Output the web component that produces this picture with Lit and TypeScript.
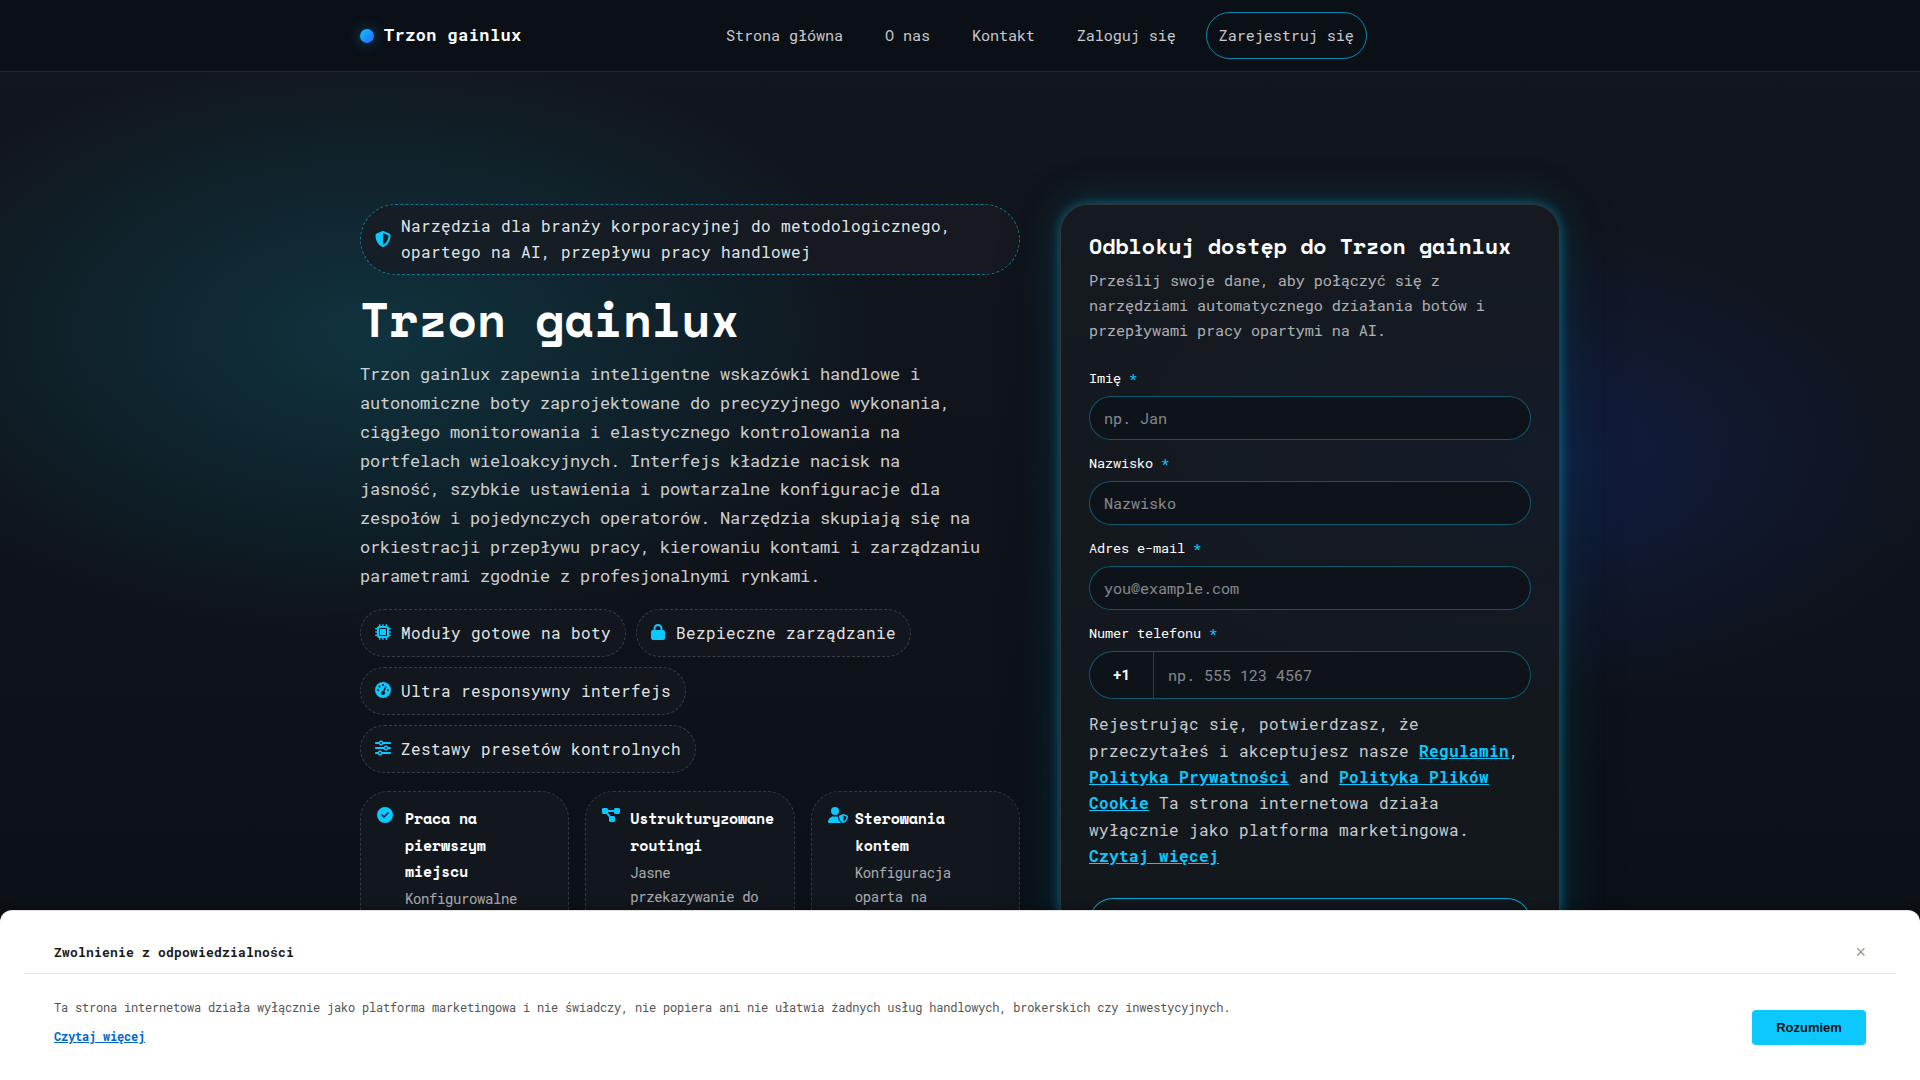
import { LitElement, html, css, svg } from "lit";
import { customElement } from "lit/decorators.js";

const ICONS: Record<string, { w: number; d: string }> = {
  shield: { w: 512, d: "M256 0c4.6 0 9.2 1 13.4 2.9L457.7 82.8c22 9.3 38.4 31 38.3 57.2c-.5 99.2-41.3 280.7-213.6 363.2c-16.7 8-36.1 8-52.8 0C57.3 420.7 16.5 239.2 16 140c-.1-26.2 16.3-47.9 38.3-57.2L242.7 2.9C246.8 1 251.4 0 256 0zm0 66.8V444.8C394 378 431.1 230.1 432 141.4L256 66.8l0 0z" },
  chip: { w: 512, d: "M176 24c0-13.3-10.7-24-24-24s-24 10.7-24 24V64c-35.3 0-64 28.7-64 64H24c-13.3 0-24 10.7-24 24s10.7 24 24 24H64v56H24c-13.3 0-24 10.7-24 24s10.7 24 24 24H64v56H24c-13.3 0-24 10.7-24 24s10.7 24 24 24H64c0 35.3 28.7 64 64 64v40c0 13.3 10.7 24 24 24s24-10.7 24-24V448h56v40c0 13.3 10.7 24 24 24s24-10.7 24-24V448h56v40c0 13.3 10.7 24 24 24s24-10.7 24-24V448c35.3 0 64-28.7 64-64h40c13.3 0 24-10.7 24-24s-10.7-24-24-24H448V280h40c13.3 0 24-10.7 24-24s-10.7-24-24-24H448V176h40c13.3 0 24-10.7 24-24s-10.7-24-24-24H448c0-35.3-28.7-64-64-64V24c0-13.3-10.7-24-24-24s-24 10.7-24 24V64H280V24c0-13.3-10.7-24-24-24s-24 10.7-24 24V64H176V24zM160 128H352c17.7 0 32 14.3 32 32V352c0 17.7-14.3 32-32 32H160c-17.7 0-32-14.3-32-32V160c0-17.7 14.3-32 32-32zm192 32H160V352H352V160z" },
  lock: { w: 448, d: "M144 144v48H304V144c0-44.2-35.8-80-80-80s-80 35.8-80 80zM80 192V144C80 64.5 144.5 0 224 0s144 64.5 144 144v48h16c35.3 0 64 28.7 64 64V448c0 35.3-28.7 64-64 64H64c-35.3 0-64-28.7-64-64V256c0-35.3 28.7-64 64-64H80z" },
  gauge: { w: 512, d: "M0 256a256 256 0 1 1 512 0A256 256 0 1 1 0 256zM288 96a32 32 0 1 0 -64 0 32 32 0 1 0 64 0zM256 416c35.3 0 64-28.7 64-64c0-17.4-6.9-33.1-18.1-44.6L366 161.7c5.3-12.1-.2-26.3-12.3-31.6s-26.3 .2-31.6 12.3L257.9 288c-.6 0-1.3 0-1.9 0c-35.3 0-64 28.7-64 64s28.7 64 64 64zM176 144a32 32 0 1 0 -64 0 32 32 0 1 0 64 0zM96 288a32 32 0 1 0 0-64 32 32 0 1 0 0 64zm352-32a32 32 0 1 0 -64 0 32 32 0 1 0 64 0z" },
  sliders: { w: 512, d: "M0 416c0 17.7 14.3 32 32 32l54.7 0c12.3 28.3 40.5 48 73.3 48s61-19.7 73.3-48L480 448c17.7 0 32-14.3 32-32s-14.3-32-32-32l-246.7 0c-12.3-28.3-40.5-48-73.3-48s-61 19.7-73.3 48L32 384c-17.7 0-32 14.3-32 32zm128 0a32 32 0 1 1 64 0 32 32 0 1 1 -64 0zM320 256a32 32 0 1 1 64 0 32 32 0 1 1 -64 0zm32-80c-32.8 0-61 19.7-73.3 48L32 224c-17.7 0-32 14.3-32 32s14.3 32 32 32l246.7 0c12.3 28.3 40.5 48 73.3 48s61-19.7 73.3-48l54.7 0c17.7 0 32-14.3 32-32s-14.3-32-32-32l-54.7 0c-12.3-28.3-40.5-48-73.3-48zM192 128a32 32 0 1 1 0-64 32 32 0 1 1 0 64zm73.3-64C253 35.7 224.8 16 192 16s-61 19.7-73.3 48L32 64C14.3 64 0 78.3 0 96s14.3 32 32 32l86.7 0c12.3 28.3 40.5 48 73.3 48s61-19.7 73.3-48L480 128c17.7 0 32-14.3 32-32s-14.3-32-32-32L265.3 64z" },
  check: { w: 512, d: "M256 512A256 256 0 1 0 256 0a256 256 0 1 0 0 512zM369 209L241 337c-9.4 9.4-24.6 9.4-33.9 0l-64-64c-9.4-9.4-9.4-24.6 0-33.9s24.6-9.4 33.9 0l47 47L335 175c9.4-9.4 24.6-9.4 33.9 0s9.4 24.6 0 33.9z" },
  diagram: { w: 576, d: "M0 80C0 53.5 21.5 32 48 32h96c26.5 0 48 21.5 48 48V96H384V80c0-26.5 21.5-48 48-48h96c26.5 0 48 21.5 48 48v96c0 26.5-21.5 48-48 48H432c-26.5 0-48-21.5-48-48V160H192v16c0 1.7-.1 3.4-.3 5L272 288h96c26.5 0 48 21.5 48 48v96c0 26.5-21.5 48-48 48H272c-26.5 0-48-21.5-48-48V336c0-1.7 .1-3.4 .3-5L144 224H48c-26.5 0-48-21.5-48-48V80z" },
  user: { w: 640, d: "M224 256A128 128 0 1 0 224 0a128 128 0 1 0 0 256zm-45.7 48C79.8 304 0 383.8 0 482.3C0 498.7 13.3 512 29.7 512H418.3c1.8 0 3.5-.2 5.3-.5c-76.3-55.1-99.8-141-103.1-200.2c-16.1-4.8-33.1-7.3-50.7-7.3H178.3zm308.8-78.3l-120 48C358 277.4 352 286.2 352 296c0 63.3 25.9 168.8 134.8 214.2c5.9 2.5 12.6 2.5 18.5 0C614.1 464.8 640 359.3 640 296c0-9.8-6-18.6-15.1-22.3l-120-48c-5.7-2.3-12.1-2.3-17.8 0zM591.4 312c-3.9 50.7-27.2 116.7-95.4 149.7V273.8L591.4 312z" },
};

const icon = (name: string) => {
  const { w, d } = ICONS[name];
  return html`<svg class="icon" width=${w / 32} height="16" viewBox="0 0 ${w} 512">${svg`<path d=${d} fill="currentColor"></path>`}</svg>`;
};

const NAV = ["Strona główna", "O nas", "Kontakt", "Zaloguj się"];
const CHIPS = [
  ["chip", "Moduły gotowe na boty"],
  ["lock", "Bezpieczne zarządzanie"],
  ["gauge", "Ultra responsywny interfejs"],
  ["sliders", "Zestawy presetów kontrolnych"],
];
const FEATURES = [
  ["check", "Praca na pierwszym miejscu", "Konfigurowalne"],
  ["diagram", "Ustrukturyzowane routingi", "Jasne przekazywanie do"],
  ["user", "Sterowania kontem", "Konfiguracja oparta na"],
];
const FIELDS = [
  ["Imię", "np. Jan"],
  ["Nazwisko", "Nazwisko"],
  ["Adres e-mail", "you@example.com"],
];

@customElement("app-root")
export class AppRoot extends LitElement {
  static styles = css`
    :host {
      --accent: #0cc8ff;
      --mono: "Roboto Mono", "DejaVu Sans Mono", monospace;
      --head: "Space Mono", "DejaVu Sans Mono", monospace;
      display: block;
      position: relative;
      height: 1080px;
      overflow: hidden;
      font: 400 16px/26.4px var(--mono);
      color: rgba(255, 255, 255, 0.9);
      background:
        radial-gradient(530px 300px at 376px 340px, rgba(12, 205, 238, 0.17), transparent 100%),
        radial-gradient(420px 245px at 1536px 462px, rgba(25, 75, 255, 0.17), transparent 100%),
        linear-gradient(180deg, #12161d 0, #10141b 350px, #0c1118 900px);
    }
    * { box-sizing: border-box; }
    .icon { display: block; flex: none; color: var(--accent); overflow: visible; }
    .header {
      height: 72px;
      background: #0b1017;
      border-bottom: 1px solid rgba(255, 255, 255, 0.09);
    }
    .bar {
      width: 1200px;
      margin: 0 auto;
      height: 71px;
      display: flex;
      align-items: center;
    }
    .brand {
      display: flex;
      align-items: center;
      gap: 10px;
      width: 353px;
      font-size: 16.8px;
      font-weight: 700;
      color: #fff;
      white-space: nowrap;
      letter-spacing: 0.52px;
    }
    .dot {
      width: 14px;
      height: 14px;
      margin-top: 1px;
      border-radius: 50%;
      background: linear-gradient(135deg, #0cc8ff, #2563ff);
      box-shadow: 0 0 14px rgba(12, 200, 255, 0.35);
    }
    .nav { display: flex; gap: 16px; font-size: 15.2px; line-height: 25px; letter-spacing: -0.12px; color: rgba(255, 255, 255, 0.78); }
    .link { padding: 10px 12px; border: 1px solid transparent; border-radius: 24px; white-space: nowrap; }
    .link.cta { margin-left: 1px; border-color: rgba(12, 200, 255, 0.65); }
    .hero {
      width: 1200px;
      margin: 0 auto;
      padding-top: 132px;
      display: grid;
      grid-template-columns: 660px 500px;
      gap: 40px;
      align-items: start;
    }
    .copy { display: flex; flex-direction: column; gap: 18px; }
    .badge {
      display: flex;
      align-items: center;
      gap: 10px;
      padding: 8px 14px;
      border: 1px dashed rgba(12, 200, 255, 0.55);
      border-radius: 36px;
      background: rgba(24, 27, 34, 0.75);
      letter-spacing: 0.4px;
    }
    .title {
      margin: 0;
      height: 49px;
      padding-top: 1px;
      font: 700 48px/50px var(--head);
      letter-spacing: -0.19px;
      color: #fff;
      white-space: nowrap;
    }
    .lead { margin: 0; font-size: 17px; line-height: 28.9px; letter-spacing: -0.2px; color: rgba(255, 255, 255, 0.8); }
    .chips { display: flex; flex-wrap: wrap; gap: 10px; letter-spacing: 0.4px; margin-top: -0.3px; }
    .chip {
      display: flex;
      align-items: center;
      gap: 10px;
      height: 48.2px;
      padding: 0 14px;
      border: 1px dashed rgba(255, 255, 255, 0.17);
      border-radius: 25px;
      background: #12171e;
      white-space: nowrap;
    }
    .chip:nth-child(2) { gap: 11px; }
    .chip .icon { margin-top: -2px; }
    .features { display: grid; grid-template-columns: repeat(3, 1fr); gap: 16px; }
    .feature {
      display: grid;
      grid-template-columns: 18px 1fr;
      gap: 10px;
      height: 220px;
      padding: 16px;
      border: 1px dashed rgba(255, 255, 255, 0.15);
      border-radius: 28px;
      background: #12171e;
    }
    .feature:nth-child(3) { gap: 9.2px; }
    .feature .icon { margin-top: -1px; }
    .name { margin-top: -3px; font: 700 15px/26.2px var(--head); letter-spacing: -0.2px; color: #fff; }
    .desc { margin-top: 3px; font-size: 14px; line-height: 24px; letter-spacing: -0.4px; color: rgba(255, 255, 255, 0.65); }
    .card {
      height: 820px;
      padding: 27px 28px;
      border: 1px solid rgba(255, 255, 255, 0.13);
      border-radius: 28px;
      background:
        radial-gradient(420px 245px at 475px 258px, rgba(30, 60, 220, 0.05), transparent 100%),
        linear-gradient(180deg, #151a20, #12171c);
      box-shadow:
        0 0 12px rgba(12, 200, 255, 0.42),
        0 0 48px rgba(12, 200, 255, 0.18),
        0 16px 60px rgba(0, 0, 0, 0.35);
    }
    .heading { font: 700 21.6px/28px var(--head); color: #fff; white-space: nowrap; letter-spacing: -0.02px; }
    .sub { margin: 8px 0 24px; font-size: 15.2px; line-height: 25.08px; letter-spacing: -0.12px; color: rgba(255, 255, 255, 0.66); }
    .field { display: flex; flex-direction: column; gap: 6px; margin-bottom: 12px; }
    .label { font-size: 13.6px; line-height: 22.44px; letter-spacing: -0.16px; color: #fff; }
    .star { color: var(--accent); }
    .input {
      height: 44.6px;
      padding: 9px 14px;
      border: 1px solid rgba(12, 200, 255, 0.38);
      border-radius: 22px;
      background: #0e131a;
      font-size: 15.2px;
      line-height: 25px;
      letter-spacing: -0.12px;
      color: rgba(255, 255, 255, 0.5);
    }
    .input.phone { display: flex; height: 48.4px; padding: 0; border-radius: 24px; }
    .code {
      width: 64px;
      border-right: 1px solid rgba(255, 255, 255, 0.17);
      text-align: center;
      font: 700 14.4px/45px var(--mono);
      color: #fff;
    }
    .number { padding: 11px 14px; }
    .terms { letter-spacing: 0.4px; color: rgba(255, 255, 255, 0.78); }
    .terms .a { color: var(--accent); font-weight: 700; text-decoration: underline; }
    .submit {
      margin-top: 28.4px;
      height: 48px;
      border: 1px solid rgba(12, 200, 255, 0.8);
      border-radius: 24px;
      background: #12171d;
    }
    .notice {
      position: absolute;
      left: 0;
      right: 0;
      bottom: 0;
      height: 170px;
      padding: 0 24px;
      border-top: 1px solid #e0e0e0;
      border-radius: 12px 12px 0 0;
      background: #fff;
      box-shadow: 0 -2px 10px rgba(0, 0, 0, 0.3);
    }
    .top {
      display: flex;
      justify-content: space-between;
      align-items: center;
      height: 63px;
      padding: 20px 30px 0;
      border-bottom: 1px solid #e8e8e8;
      font-size: 13px;
      font-weight: 700;
      letter-spacing: 0.2px;
      color: #1a1a1a;
    }
    .close { font: 400 18px/20px "Liberation Sans", sans-serif; letter-spacing: 0; color: #999; }
    .body { display: flex; justify-content: space-between; padding: 19px 30px 0; }
    .text { font-size: 12px; line-height: 28.8px; letter-spacing: -0.2px; color: #555; }
    .more { color: #0066cc; font-weight: 700; text-decoration: underline; }
    .ok {
      width: 114px;
      height: 35px;
      margin-top: 17px;
      border-radius: 4px;
      background: var(--accent);
      color: #111;
      text-align: center;
      font: 700 13px/35px "Liberation Sans", sans-serif;
    }
  `;

  render() {
    return html`
      <header class="header">
        <div class="bar">
          <div class="brand"><span class="dot"></span>Trzon gainlux</div>
          <nav class="nav">
            ${NAV.map((n) => html`<a class="link">${n}</a>`)}
            <a class="link cta">Zarejestruj się</a>
          </nav>
        </div>
      </header>
      <main class="hero">
        <section class="copy">
          <div class="badge">${icon("shield")}<span>Narzędzia dla branży korporacyjnej do metodologicznego, opartego na AI, przepływu pracy handlowej</span></div>
          <h1 class="title">Trzon gainlux</h1>
          <p class="lead">
            Trzon gainlux zapewnia inteligentne wskazówki handlowe i<br />autonomiczne boty zaprojektowane do precyzyjnego wykonania,<br />ciągłego monitorowania i elastycznego kontrolowania na<br />portfelach wieloakcyjnych. Interfejs kładzie nacisk na<br />jasność, szybkie ustawienia i powtarzalne konfiguracje dla<br />zespołów i pojedynczych operatorów. Narzędzia skupiają się na<br />orkiestracji przepływu pracy, kierowaniu kontami i zarządzaniu<br />parametrami zgodnie z profesjonalnymi rynkami.
          </p>
          <div class="chips">${CHIPS.map(([i, t]) => html`<div class="chip">${icon(i)}<span>${t}</span></div>`)}</div>
          <div class="features">
            ${FEATURES.map(([i, t, d]) => html`<article class="feature">${icon(i)}<div><div class="name">${t}</div><div class="desc">${d}</div></div></article>`)}
          </div>
        </section>
        <section class="card">
          <div class="heading">Odblokuj dostęp do Trzon gainlux</div>
          <div class="sub">Prześlij swoje dane, aby połączyć się z narzędziami automatycznego działania botów i przepływami pracy opartymi na AI.</div>
          ${FIELDS.map(([l, p]) => html`<div class="field"><div class="label">${l} <span class="star">*</span></div><div class="input">${p}</div></div>`)}
          <div class="field">
            <div class="label">Numer telefonu <span class="star">*</span></div>
            <div class="input phone"><div class="code">+1</div><div class="number">np. 555 123 4567</div></div>
          </div>
          <div class="terms">Rejestrując się, potwierdzasz, że przeczytałeś i akceptujesz nasze <a class="a">Regulamin</a>, <a class="a">Polityka Prywatności</a> and <a class="a">Polityka Plików Cookie</a> Ta strona internetowa działa wyłącznie jako platforma marketingowa. <a class="a">Czytaj więcej</a></div>
          <div class="submit"></div>
        </section>
      </main>
      <aside class="notice">
        <div class="top"><span>Zwolnienie z odpowiedzialności</span><span class="close">×</span></div>
        <div class="body">
          <div class="text">Ta strona internetowa działa wyłącznie jako platforma marketingowa i nie świadczy, nie popiera ani nie ułatwia żadnych usług handlowych, brokerskich czy inwestycyjnych.<br /><a class="more">Czytaj więcej</a></div>
          <div class="ok">Rozumiem</div>
        </div>
      </aside>
    `;
  }
}
